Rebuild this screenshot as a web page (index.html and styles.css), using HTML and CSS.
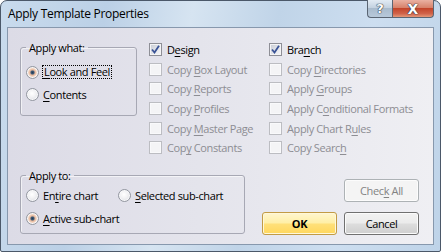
FILE: index.html
```html
<!DOCTYPE html>
<html lang="en">

<head>
  <meta charset="UTF-8">
  <link rel="stylesheet" href="styles.css">
  <title>Apply Template Properties</title>
</head>

<body>
  <div class="window">
    <div class="titlebar">
      <span class="title">Apply Template Properties</span>
      <div class="caption-btns">
        <span class="cap help">?</span>
        <span class="cap close">X</span>
      </div>
    </div>

    <div class="client">
      <div class="top-row">
        <fieldset class="group what">
          <legend>Apply what:</legend>
          <label class="opt"><span class="radio on"></span><span class="focus"><u>L</u>ook and Feel</span></label>
          <label class="opt"><span class="radio"></span><span><u>C</u>ontents</span></label>
        </fieldset>

        <div class="checks">
          <label class="chk"><span class="box on"><svg width="9" height="9" viewBox="0 0 9 9"><path d="M1 4.5 L3.5 7.5 L8 0.8" fill="none" stroke="#3a5396" stroke-width="1.8"/></svg></span><span>D<u>e</u>sign</span></label>
          <label class="chk off"><span class="box"></span><span>Copy <u>B</u>ox Layout</span></label>
          <label class="chk off"><span class="box"></span><span>Copy <u>R</u>eports</span></label>
          <label class="chk off"><span class="box"></span><span>Copy <u>P</u>rofiles</span></label>
          <label class="chk off"><span class="box"></span><span>Copy <u>M</u>aster Page</span></label>
          <label class="chk off"><span class="box"></span><span>Cop<u>y</u> Constants</span></label>
        </div>

        <div class="checks">
          <label class="chk"><span class="box on"><svg width="9" height="9" viewBox="0 0 9 9"><path d="M1 4.5 L3.5 7.5 L8 0.8" fill="none" stroke="#3a5396" stroke-width="1.8"/></svg></span><span>Bra<u>n</u>ch</span></label>
          <label class="chk off"><span class="box"></span><span>Copy <u>D</u>irectories</span></label>
          <label class="chk off"><span class="box"></span><span>Apply <u>G</u>roups</span></label>
          <label class="chk off"><span class="box"></span><span>Apply C<u>o</u>nditional Formats</span></label>
          <label class="chk off"><span class="box"></span><span>Apply Chart R<u>u</u>les</span></label>
          <label class="chk off"><span class="box"></span><span>Copy Searc<u>h</u></span></label>
        </div>
      </div>

      <div class="bottom-row">
        <fieldset class="group to">
          <legend>Apply to:</legend>
          <div class="opt-line">
            <label class="opt wide"><span class="radio"></span><span>En<u>t</u>ire chart</span></label>
            <label class="opt"><span class="radio"></span><span><u>S</u>elected sub-chart</span></label>
          </div>
          <label class="opt"><span class="radio on"></span><span><u>A</u>ctive sub-chart</span></label>
        </fieldset>

        <div class="buttons">
          <button class="btn" disabled>Chec<u>k</u> All</button>
          <div class="btn-row">
            <button class="btn default">OK</button>
            <button class="btn">Cancel</button>
          </div>
        </div>
      </div>
    </div>
  </div>
</body>
</html>
```

FILE: styles.css
```css
html,
body {
  margin: 0;
  height: 100%;
  overflow: hidden;
  background: #fff;
}

body {
  font-family: "Open Sans", "Noto Sans", sans-serif;
  font-size: 11px;
  letter-spacing: -0.38px;
  color: #000;
}

u {
  text-decoration-thickness: 1px;
  text-underline-offset: 2px;
}

/* ウィンドウ枠 */
.window {
  box-sizing: border-box;
  width: 441px;
  height: 252px;
  padding: 0 6px 6px 6px;
  border: 1px solid #4b5869;
  border-radius: 7px 7px 2px 2px;
  background: linear-gradient(100deg, #c9dbed 0%, #bbd0e6 22%, #d6e4f1 40%, #c0d4e8 58%, #cddef0 78%, #bed3e8 100%);
  display: flex;
  flex-direction: column;
}

.titlebar {
  height: 26px;
  display: flex;
  align-items: flex-start;
  justify-content: space-between;
}

.title {
  padding: 5px 0 0 1px;
  font-size: 12px;
  letter-spacing: -0.3px;
  line-height: 16px;
  color: #000;
}

.caption-btns {
  display: flex;
  margin-top: -1px;
}

.cap {
  box-sizing: border-box;
  height: 18px;
  display: flex;
  align-items: center;
  justify-content: center;
  border: 1px solid #5a6573;
  border-top: none;
  color: #fff;
  font-family: "DejaVu Sans", sans-serif;
  font-weight: bold;
  letter-spacing: 0;
  text-shadow: 0 0 1px #2c3540, 0 0 1px #2c3540, 0 0 1px #2c3540;
}

.help {
  width: 25px;
  font-size: 13px;
  border-right: none;
  border-radius: 0 0 0 4px;
  background: linear-gradient(to bottom, #e2ebf4 0%, #c4d2e0 45%, #a9bbcd 50%, #b8c9da 100%);
}

.close {
  width: 42px;
  font-size: 14px;
  border-radius: 0 0 4px 0;
  background: linear-gradient(to bottom, #eab1a2 0%, #d7826b 45%, #c3452b 50%, #d0634a 80%, #e59879 100%);
}

/* クライアント領域 */
.client {
  flex: 1;
  box-sizing: border-box;
  border: 1px solid #8798ad;
  padding: 12px 0 0 12px;
  background: linear-gradient(to right, #dcdbe6 0%, #e4e4ec 45%, #efeff3 100%);
}

.top-row {
  display: flex;
  height: 118px;
}

.bottom-row {
  display: flex;
  margin-top: 10px;
}

.group {
  box-sizing: border-box;
  margin: 0;
  min-width: 0;
  border: 1px solid #a7a8b4;
  border-radius: 3px;
  box-shadow: inset 1px 1px 0 rgba(255, 255, 255, 0.6);
  padding: 0 4px 0 5px;
}

.group legend {
  padding: 0 3px;
  line-height: 15px;
}

.what {
  width: 117px;
  height: 76px;
  padding-top: 6px;
}

.to {
  width: 225px;
  height: 66px;
  padding-top: 1px;
}

.opt {
  display: flex;
  align-items: center;
  height: 22px;
}

.to .opt {
  height: 23px;
}

.opt-line {
  display: flex;
}

.opt.wide {
  width: 92px;
}

.radio {
  box-sizing: border-box;
  width: 13px;
  height: 13px;
  margin-right: 4px;
  border-radius: 50%;
  border: 1px solid #9397a0;
  background: radial-gradient(circle at 45% 40%, #ffffff 0%, #f2f2f4 40%, #d4d6dc 100%);
  box-shadow: inset 0 0 0 1px #f7f7f9;
  flex: none;
}

.radio.on {
  background: radial-gradient(circle at 50% 50%, #243a52 0%, #3a5775 18%, #e6b79b 34%, #f4d9c8 55%, #e9e9ee 100%);
}

.focus {
  margin-left: -1px;
  padding: 0 1px;
  line-height: 12px;
  border: 1px dotted #000;
}

/* チェックボックス列 */
.checks {
  display: flex;
  flex-direction: column;
  margin-left: 12px;
  width: 108px;
}

.checks + .checks {
  width: auto;
}

.chk {
  display: flex;
  align-items: center;
  height: 19.6px;
  white-space: nowrap;
}

.box {
  box-sizing: border-box;
  width: 13px;
  height: 13px;
  margin-right: 5px;
  border: 1px solid #bcbdc2;
  background: #f4f4f6;
  box-shadow: inset 0 0 0 1px #f9f9fb;
  flex: none;
  display: flex;
  align-items: center;
  justify-content: center;
}

.box.on {
  border-color: #8e8f96;
  background: linear-gradient(135deg, #c6cad3 0%, #e3e5ea 55%, #f8f8f9 100%);
  box-shadow: inset 0 0 0 1px #f4f4f6;
}

.chk.off {
  color: #8d8d93;
}

/* ボタン */
.buttons {
  margin-left: auto;
  margin-right: 14px;
  padding-top: 11px;
  display: flex;
  flex-direction: column;
  align-items: flex-end;
}

.btn-row {
  display: flex;
  margin-top: 10px;
}

.btn {
  box-sizing: border-box;
  width: 75px;
  height: 23px;
  margin: 0 0 0 7px;
  padding: 0;
  font: inherit;
  letter-spacing: inherit;
  color: #000;
  border: 1px solid #707070;
  border-radius: 3px;
  box-shadow: inset 0 0 0 1px #fbfbfb;
  background: linear-gradient(to bottom, #f2f2f2 0%, #ebebeb 48%, #dddddd 52%, #cfcfcf 100%);
  -webkit-appearance: none;
}

.btn:disabled {
  color: #838383;
  border-color: #adb2b5;
  box-shadow: inset 0 0 0 1px #fcfcfc;
  background: #f4f4f4;
}

.default {
  font-weight: bold;
  border-color: #c29b45;
  box-shadow: inset 0 0 0 1px #fff8d9;
  background: linear-gradient(to bottom, #fff6cf 0%, #ffefa6 48%, #ffe07a 52%, #ffd75c 100%);
}
```
